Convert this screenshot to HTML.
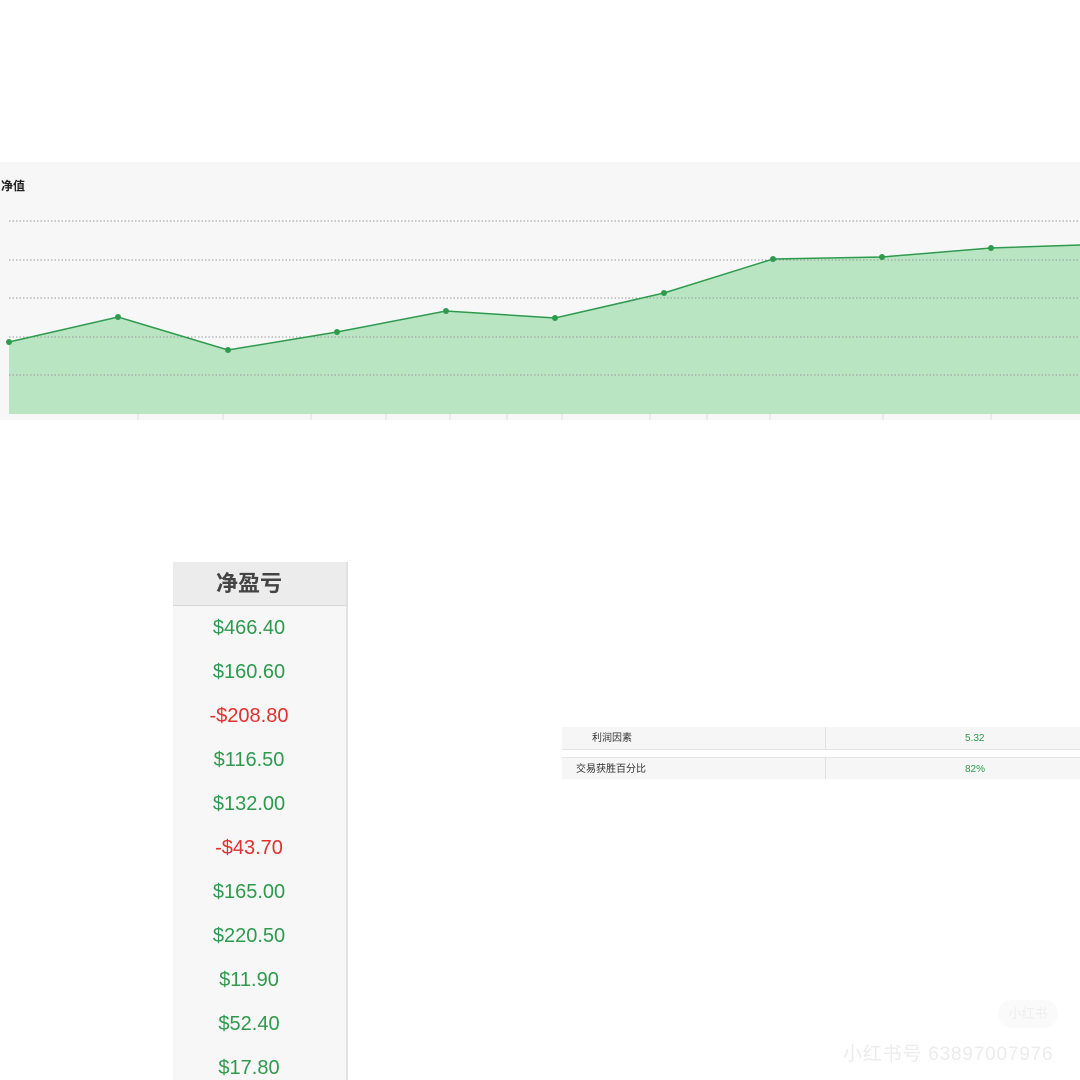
<!DOCTYPE html>
<html><head><meta charset="utf-8"><style>
body{margin:0;width:1080px;height:1080px;background:#fff;position:relative;overflow:hidden;font-family:"Liberation Sans","Noto Sans CJK SC",sans-serif}
.abs{position:absolute}
.v{position:absolute;left:0;width:152px;text-align:center;font-size:20px;color:#2e9a4e;top:0}
.r{color:#e03030}
</style></head><body>
<div class="abs" style="left:0;top:162px;width:1080px;height:258px;background:#f7f7f7"></div>
<div class="abs" style="left:1px;top:177px;font-size:12px;font-weight:bold;color:#222">净值</div>
<svg class="abs" style="left:0;top:0" width="1080" height="440">
<polygon fill="#b9e5c3" points="9,414 9,342 118,317 228,350 337,332 446,311 555,318 664,293 773,259 882,257 991,248 1080,245 1080,414"/>
<g stroke="#999" stroke-dasharray="1.5,2" stroke-width="1">
<line x1="9" y1="221" x2="1080" y2="221"/><line x1="9" y1="260" x2="1080" y2="260"/><line x1="9" y1="298" x2="1080" y2="298"/><line x1="9" y1="337" x2="1080" y2="337"/><line x1="9" y1="375" x2="1080" y2="375"/></g>
<polyline fill="none" stroke="#2e9a4e" stroke-width="1.5" points="9,342 118,317 228,350 337,332 446,311 555,318 664,293 773,259 882,257 991,248 1080,245"/>
<g fill="#2e9a4e"><circle cx="9" cy="342" r="3"/><circle cx="118" cy="317" r="3"/><circle cx="228" cy="350" r="3"/><circle cx="337" cy="332" r="3"/><circle cx="446" cy="311" r="3"/><circle cx="555" cy="318" r="3"/><circle cx="664" cy="293" r="3"/><circle cx="773" cy="259" r="3"/><circle cx="882" cy="257" r="3"/><circle cx="991" cy="248" r="3"/></g>
<g stroke="#ddd"><line x1="138" y1="414" x2="138" y2="420"/><line x1="223" y1="414" x2="223" y2="420"/><line x1="311" y1="414" x2="311" y2="420"/><line x1="386" y1="414" x2="386" y2="420"/><line x1="450" y1="414" x2="450" y2="420"/><line x1="507" y1="414" x2="507" y2="420"/><line x1="562" y1="414" x2="562" y2="420"/><line x1="650" y1="414" x2="650" y2="420"/><line x1="707" y1="414" x2="707" y2="420"/><line x1="770" y1="414" x2="770" y2="420"/><line x1="883" y1="414" x2="883" y2="420"/><line x1="991" y1="414" x2="991" y2="420"/></g>
</svg>
<div class="abs" style="left:173px;top:562px;width:175px;height:518px;background:#f7f7f7;border-right:2px solid #e2e2e2;box-sizing:border-box">
<div style="height:43px;background:#ececec;border-bottom:1px solid #d8d8d8;font-size:22px;font-weight:bold;color:#444;line-height:43px"><span style="display:block;width:152px;text-align:center">净盈亏</span></div>
<div class="v" style="top:55px">$466.40</div>
<div class="v" style="top:99px">$160.60</div>
<div class="v r" style="top:143px">-$208.80</div>
<div class="v" style="top:187px">$116.50</div>
<div class="v" style="top:231px">$132.00</div>
<div class="v r" style="top:275px">-$43.70</div>
<div class="v" style="top:319px">$165.00</div>
<div class="v" style="top:363px">$220.50</div>
<div class="v" style="top:407px">$11.90</div>
<div class="v" style="top:451px">$52.40</div>
<div class="v" style="top:495px">$17.80</div>
</div>
<div class="abs" style="left:562px;top:727px;width:518px;height:22px;background:#f6f6f6;border-bottom:1px solid #e4e4e4;font-size:10px;line-height:22px">
<span class="abs" style="left:30px;color:#333;top:1px">利润因素</span><span class="abs" style="left:263px;top:0;height:22px;border-left:1px solid #e0e0e0"></span><span class="abs" style="left:403px;color:#2e9a4e;top:1px">5.32</span></div>
<div class="abs" style="left:562px;top:757px;width:518px;height:21px;background:#f6f6f6;border-top:1px solid #e4e4e4;font-size:10px;line-height:21px">
<span class="abs" style="left:14px;color:#333;top:1px">交易获胜百分比</span><span class="abs" style="left:263px;top:0;height:21px;border-left:1px solid #e0e0e0"></span><span class="abs" style="left:403px;color:#2e9a4e;top:1px">82%</span></div>
<div class="abs" style="left:998px;top:1000px;width:60px;height:28px;border-radius:14px;background:#fafafa;color:#eee;font-size:13px;line-height:28px;text-align:center">小红书</div>
<div class="abs" style="left:843px;top:1039px;color:#ececec;font-size:19px;letter-spacing:0.8px">小红书号 63897007976</div>
</body></html>
